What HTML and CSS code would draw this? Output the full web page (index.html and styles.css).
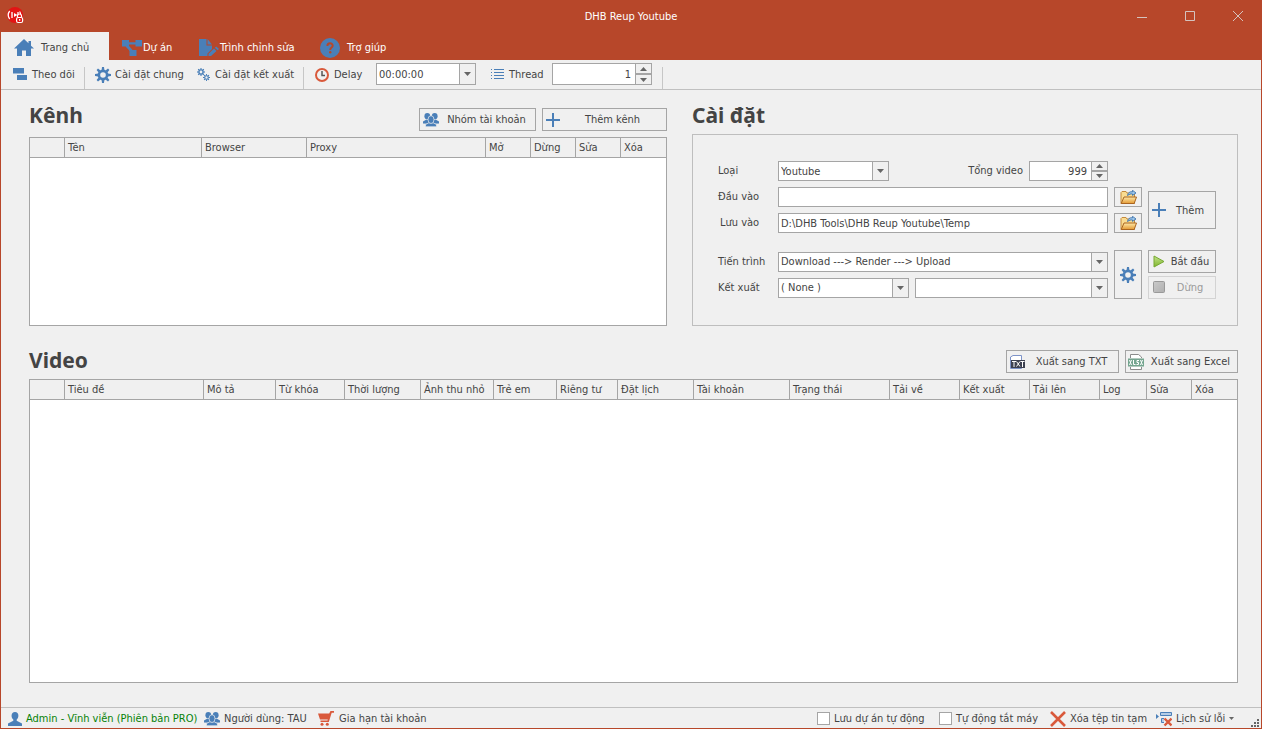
FILE: index.html
```html
<!DOCTYPE html>
<html lang="vi">
<head>
<meta charset="utf-8">
<title>DHB Reup Youtube</title>
<link rel="stylesheet" href="styles.css">
</head>
<body>
<svg class="sprite" aria-hidden="true">
  <symbol id="gear" viewBox="0 0 16 16"><g fill="#4a7fb8"><path fill-rule="evenodd" d="M8 2.600a5.400 5.400 0 1 0 0 10.800A5.400 5.400 0 1 0 8 2.600zM8 5.200a2.800 2.800 0 1 1 0 5.600 2.800 2.800 0 1 1 0-5.600z"/><path d="M7 0h2l.4 3.300H6.600zM7 16h2l.4-3.300H6.600zM0 7v2l3.300.4V6.600zM16 7v2l-3.300.4V6.600zM1.600 3l1.400-1.400 2.600 2-2 2zM13 1.600 14.400 3l-2 2.600-2-2zM1.600 13 3 14.400l2.600-2-2-2zM13 14.400l1.400-1.400-2-2.600-2 2z"/></g></symbol>
  <symbol id="people" viewBox="0 0 16 14"><g fill="#4a7fb8"><ellipse cx="4.300" cy="3.200" rx="2.900" ry="3.100"/><ellipse cx="11.700" cy="3.200" rx="2.900" ry="3.100"/><path d="M0 10.500V8.500l3-1.800h3l1 4zM16 10.500V8.500l-3-1.800h-3l-1 4z"/></g><g fill="#4a7fb8" stroke="#f0f0f0" stroke-width=".7"><path d="M2.500 13.800v-2.300l3.300-1.700h4.400l3.300 1.700v2.300z"/><ellipse cx="8" cy="6.600" rx="3" ry="3.900"/></g></symbol>
  <symbol id="plus" viewBox="0 0 14 14"><path fill="#4a7fb8" d="M6 0h2v6h6v2H8v6H6V8H0V6h6z"/></symbol>
  <symbol id="down" viewBox="0 0 7 4"><path fill="#666" d="M0 0h7L3.500 4z"/></symbol>
  <symbol id="up" viewBox="0 0 7 4"><path fill="#666" d="M0 4h7L3.500 0z"/></symbol>
  <symbol id="folder" viewBox="0 0 17 15"><defs><linearGradient id="fold" x1="0" y1="0" x2="0" y2="1"><stop offset="0" stop-color="#ffe9a8"/><stop offset="1" stop-color="#e39a35"/></linearGradient></defs><path d="M1 13.500V2.500L2 1.500h4l1 1.500h7.500v10.500z" fill="#f9dc92" stroke="#c58a3a"/><path d="M1.200 13.500 4 7h12.500l-2.300 6.500z" fill="url(#fold)" stroke="#a96420"/><path d="M7.500 5.500c.5-3 2.500-4.200 5-3.700V.3L16 3l-3.500 2.400V4c-2-.3-3 .2-5 1.500z" fill="#9cc6ea" stroke="#2f67a5" stroke-width=".8"/></symbol>
</svg>
<div class="window">
  <header class="titlebar">
    <svg class="logo" viewBox="0 0 18 18"><circle cx="8" cy="8" r="8" fill="#e31414"/><g fill="none" stroke="#fff" stroke-width="1.300"><path d="M2.700 4C.8 6.500.8 9.500 2.700 12M5 5v6M12.600 4.500c.7 1 1 2 1 3M11 5v3"/></g><path d="m7 6 3.500 2L7 10z" fill="#fff"/><path d="M10.500 10.500V9a2 2 0 0 1 4 0v1.500" fill="none" stroke="#fff" stroke-width="1.200"/><rect x="9.600" y="10.500" width="6" height="5" rx="1.500" fill="#e31414" stroke="#fff" stroke-width="1.200"/><path d="M12 12h1.300v1.800H12z" fill="#fff"/></svg>
    <h1 class="title">DHB Reup Youtube</h1>
    <div class="window-buttons">
      <button type="button" aria-label="Thu nhỏ"><svg viewBox="0 0 10 10"><path d="M0 6.500h10"/></svg></button>
      <button type="button" aria-label="Phóng to"><svg viewBox="0 0 10 10"><path d="M.5.5h9v9h-9z"/></svg></button>
      <button type="button" aria-label="Đóng"><svg viewBox="0 0 10 10"><path d="m0 0 10 10M10 0 0 10"/></svg></button>
    </div>
  </header>
  <nav class="tabs">
    <a class="tab tab-active" href="#home"><svg class="icon20" viewBox="0 0 20 20"><path fill="#4a7fb8" d="M10 1 0 10.500h3V18h5v-5.500h4V18h5v-7.500h3l-3-2.700V3h-2.500v2.200z"/></svg>Trang chủ</a>
    <a class="tab tab-project" href="#project"><svg class="icon20" viewBox="0 0 20 20"><g fill="#4a7fb8"><path d="M0 2h7v6.500H0zM13.500 2H20v6.500h-6.500zM7.500 12h7v6h-7z"/><path d="M6 4.200h9v2.200H6zM3.500 8.500 6.200 7l4.800 5.500-2.500 1.300z"/></g></svg>Dự án</a>
    <a class="tab tab-editor" href="#editor"><svg class="icon20" viewBox="0 0 20 20"><g fill="#4a7fb8"><path d="M0 1h7.500v6.500H13V11l-4.500 4.500V18H0z"/><path d="M8.500 1 13 6.500H8.500zM9.500 15.700l5.500-5.200 2.500 2.500-5.500 5H9.500zM15.800 9.700 17.200 8.500l2.800 2.600-1.500 1.200z"/></g></svg>Trình chỉnh sửa</a>
    <a class="tab tab-help" href="#help"><svg class="icon20" viewBox="0 0 20 20"><circle cx="10" cy="10" r="10" fill="#4a7fb8"/><path d="M7.400 8c0-3.600 5.400-3.400 5.300-.3 0 1.900-2.500 2-2.500 4.300" fill="none" stroke="#b7472a" stroke-width="2"/><circle cx="10.200" cy="14.200" r="1.200" fill="#b7472a"/></svg>Trợ giúp</a>
  </nav>
  <div class="frame">
    <div class="toolbar">
      <button type="button" class="tool tool-watch"><svg class="icon14" viewBox="0 0 14 14"><path fill="#4a7fb8" d="M0 0h11v5.500H0zM4 7h10v5H4z"/></svg>Theo dõi</button>
      <span class="divider"></span>
      <button type="button" class="tool tool-general"><svg class="icon16"><use href="#gear"/></svg>Cài đặt chung</button>
      <button type="button" class="tool tool-export"><svg class="icon14" viewBox="0 0 14 14"><use href="#gear" x="0" y="0" width="8" height="8"/><use href="#gear" x="6" y="6" width="7" height="7"/></svg>Cài đặt kết xuất</button>
      <span class="divider"></span>
      <label class="tool-label delay-label" for="delay"><svg class="icon14" viewBox="0 0 14 14"><circle cx="7" cy="7" r="6" fill="none" stroke="#d9593b" stroke-width="2"/><path d="M7 3v4.500h3" fill="none" stroke="#555" stroke-width="1.500"/></svg>Delay</label>
      <div class="field field-tall delay"><input id="delay" type="text" value="00:00:00"><button type="button" class="drop" aria-label="Mở danh sách"><svg class="arrow"><use href="#down"/></svg></button></div>
      <label class="tool-label thread-label" for="thread"><svg class="icon14" viewBox="0 0 14 14"><path fill="#4a7fb8" d="M1 1h1v1H1zM4 1h10v1H4zM1 4h1v1H1zM4 4h10v1H4zM1 7h1v1H1zM4 7h10v1H4zM1 10h1v1H1zM4 10h10v1H4z"/></svg>Thread</label>
      <div class="field field-tall thread"><input id="thread" class="number" type="number" value="1"><span class="spin"><button type="button" aria-label="Tăng"><svg class="arrow"><use href="#up"/></svg></button><button type="button" aria-label="Giảm"><svg class="arrow"><use href="#down"/></svg></button></span></div>
      <span class="divider"></span>
    </div>
    <main class="content">
      <section class="channels">
        <div class="section-head">
          <h2>Kênh</h2>
          <button type="button" class="btn btn-group"><svg class="icon16"><use href="#people"/></svg><span>Nhóm tài khoản</span></button>
          <button type="button" class="btn btn-channel"><svg class="icon14"><use href="#plus"/></svg><span>Thêm kênh</span></button>
        </div>
        <div class="grid-box">
          <table>
            <colgroup><col class="w35"><col class="w137"><col class="w105"><col class="w179"><col class="w45"><col class="w45"><col class="w45"><col class="w45"></colgroup>
            <thead><tr><th></th><th>Tên</th><th>Browser</th><th>Proxy</th><th>Mở</th><th>Dừng</th><th>Sửa</th><th>Xóa</th></tr></thead>
          </table>
        </div>
      </section>
      <section class="settings">
        <h2>Cài đặt</h2>
        <form class="panel">
          <div class="rows source">
            <label for="kind">Loại</label>
            <div class="row-pair">
              <div class="field kind"><select id="kind"><option>Youtube</option></select><span class="drop"><svg class="arrow"><use href="#down"/></svg></span></div>
              <div class="total"><label for="total">Tổng video</label>
              <div class="field total-field"><input id="total" class="number" type="number" value="999"><span class="spin"><button type="button" aria-label="Tăng"><svg class="arrow"><use href="#up"/></svg></button><button type="button" aria-label="Giảm"><svg class="arrow"><use href="#down"/></svg></button></span></div></div>
            </div>
            <label class="line2" for="input">Đầu vào</label>
            <div class="field line2"><input id="input" type="text"></div>
            <button type="button" class="btn btn-icon line2" aria-label="Chọn đầu vào"><svg class="folder"><use href="#folder"/></svg></button>
            <label class="line3 label-save" for="output">Lưu vào</label>
            <div class="field line3"><input id="output" type="text" value="D:\DHB Tools\DHB Reup Youtube\Temp"></div>
            <button type="button" class="btn btn-icon line3" aria-label="Chọn nơi lưu"><svg class="folder"><use href="#folder"/></svg></button>
            <button type="button" class="btn btn-add"><svg class="icon14"><use href="#plus"/></svg><span>Thêm</span></button>
          </div>
          <div class="rows process">
            <label for="process">Tiến trình</label>
            <div class="field"><select id="process"><option>Download ---&gt; Render ---&gt; Upload</option></select><span class="drop"><svg class="arrow"><use href="#down"/></svg></span></div>
            <button type="button" class="btn btn-icon btn-gear" aria-label="Cài đặt tiến trình"><svg class="icon16"><use href="#gear"/></svg></button>
            <button type="button" class="btn btn-run"><svg class="icon14" viewBox="0 0 14 14"><defs><linearGradient id="go" x1="0" y1="0" x2="0" y2="1"><stop offset="0" stop-color="#c3e38a"/><stop offset="1" stop-color="#7fb52c"/></linearGradient></defs><path d="M2 1 12 6.500 2 12z" fill="url(#go)" stroke="#76a833"/></svg><span>Bắt đầu</span></button>
            <label for="export">Kết xuất</label>
            <div class="row-pair">
              <div class="field export"><select id="export"><option>( None )</option></select><span class="drop"><svg class="arrow"><use href="#down"/></svg></span></div>
              <div class="field preset"><select aria-label="Mẫu kết xuất"><option></option></select><span class="drop"><svg class="arrow"><use href="#down"/></svg></span></div>
            </div>
            <button type="button" class="btn btn-run" disabled><svg class="icon14" viewBox="0 0 14 14"><defs><linearGradient id="halt" x1="0" y1="0" x2="1" y2="1"><stop offset="0" stop-color="#cacaca"/><stop offset="1" stop-color="#afafaf"/></linearGradient></defs><rect x="1.500" y=".5" width="11" height="11" rx="1" fill="url(#halt)" stroke="#999"/></svg><span>Dừng</span></button>
          </div>
        </form>
      </section>
      <section class="videos">
        <div class="section-head">
          <h2>Video</h2>
          <button type="button" class="btn btn-file"><svg class="icon16" viewBox="0 0 16 16"><path d="M1.500 14.500V3L4 1.500h8.500v13z" fill="#fff" stroke="#7d93c8"/><path fill="#3c4050" d="M2 6h14v8H2z"/><path d="M3 7.500h4M5 7.500V13M7.500 7.500 11 12.500M11 7.500 7.500 12.500M11.500 7.500h4M13.500 7.500V13" stroke="#fff" fill="none"/></svg><span>Xuất sang TXT</span></button>
          <button type="button" class="btn btn-file"><svg class="icon16" viewBox="0 0 16 16"><path d="M2.500 4V.5h8L13.500 3v1M2.500 13v2.500h11V13" fill="#fff" stroke="#8b8b8b"/><path fill="#74a58f" d="M0 4.500h16v8H0z"/><path d="m1.500 6 2 5M3.500 6l-2 5M5.500 6v4.500h2M11 6.500H9v2h1.500v2H8.500M12.500 6l2 5M14.500 6l-2 5" stroke="#fff" fill="none"/></svg><span>Xuất sang Excel</span></button>
        </div>
        <div class="grid-box">
          <table>
            <colgroup><col class="w35"><col class="w139"><col class="w72"><col class="w69"><col class="w76"><col class="w73"><col class="w63"><col class="w61"><col class="w76"><col class="w96"><col class="w100"><col class="w70"><col class="w70"><col class="w70"><col class="w47"><col class="w45"><col class="w45"></colgroup>
            <thead><tr><th></th><th>Tiêu đề</th><th>Mô tả</th><th>Từ khóa</th><th>Thời lượng</th><th>Ảnh thu nhỏ</th><th>Trẻ em</th><th>Riêng tư</th><th>Đặt lịch</th><th>Tài khoản</th><th>Trạng thái</th><th>Tải về</th><th>Kết xuất</th><th>Tải lên</th><th>Log</th><th>Sửa</th><th>Xóa</th></tr></thead>
          </table>
        </div>
      </section>
    </main>
    <footer class="status">
      <span class="account"><svg class="icon14" viewBox="0 0 14 14"><path fill="#4a7fb8" d="M7 0c4.500 0 4 6 1.700 7.500v1.300L14 11.500V14H0v-2.500l5.300-2.700V7.500C3 6 2.500 0 7 0z"/></svg>Admin - Vĩnh viễn (Phiên bản PRO)</span>
      <span class="user"><svg class="icon16"><use href="#people"/></svg>Người dùng: TAU</span>
      <button type="button" class="tool renew"><svg class="icon16" viewBox="0 0 16 16"><path fill="#d9593b" d="M0 2.500h11.200L12.500 0H16v1.700h-2.300L10.800 11H2.500V9.600h7l.3-1H2z"/><circle cx="4" cy="13.300" r="1.500" fill="#d9593b"/><circle cx="9.300" cy="13.300" r="1.500" fill="#d9593b"/></svg>Gia hạn tài khoản</button>
      <label class="check autosave"><input type="checkbox">Lưu dự án tự động</label>
      <label class="check shutdown"><input type="checkbox">Tự động tắt máy</label>
      <button type="button" class="tool cleanup"><svg class="icon16" viewBox="0 0 16 16"><path d="m1 1 14 14M15 1 1 15" stroke="#d9593b" stroke-width="2.600"/></svg>Xóa tệp tin tạm</button>
      <button type="button" class="tool errors"><svg class="icon16" viewBox="0 0 16 16"><path fill="#4a7fb8" d="M0 3l3 2.500L0 8z"/><path d="M4.500 1.500h11v3h-11zM8 7.500H5.500v4H8" fill="#b5cce5" stroke="#4a7fb8"/><path d="m8.500 7.500 7 7M15.500 7.500l-7 7" stroke="#d9593b" stroke-width="2.400"/></svg>Lịch sử lỗi<svg class="caret"><use href="#down"/></svg></button>
      <svg class="grip" viewBox="0 0 9 9"><path fill="#666" d="M6 0h2v2H6zM3 3h2v2H3zM6 3h2v2H6zM0 6h2v2H0zM3 6h2v2H3zM6 6h2v2H6z"/></svg>
    </footer>
  </div>
</div>
</body>
</html>
```
FILE: styles.css
```css
* { box-sizing: border-box; }
:root { --accent: #b7472a; --face: #f0f0f0; --line: #a5a5a5; --text: #444; }
body { margin: 0; background: var(--face); color: var(--text); font: 11px/14px "DejaVu Sans Condensed", "DejaVu Sans", sans-serif; font-stretch: condensed; }
button, input, select { font: inherit; color: inherit; margin: 0; padding: 0; border: 0; background: none; border-radius: 0; white-space: nowrap; }
svg { display: block; flex: none; }
.sprite { position: absolute; width: 0; height: 0; }
.icon14 { width: 14px; height: 14px; }
.icon16 { width: 16px; height: 16px; }
.icon20 { width: 20px; height: 20px; }
.arrow { width: 7px; height: 4px; }
.window { min-height: 100vh; display: flex; flex-direction: column; }

.titlebar { height: 32px; display: grid; grid-template-columns: 1fr auto 1fr; align-items: center; background: var(--accent); color: #fff; }
.logo { width: 18px; height: 18px; margin-left: 7px; }
.title { margin: 0; font-size: 11px; font-weight: 400; padding-top: 2px; }
.window-buttons { display: flex; justify-content: flex-end; align-self: stretch; }
.window-buttons button { width: 48px; display: grid; place-items: center; }
.window-buttons svg { width: 10px; height: 10px; fill: none; stroke: #d5c3be; }

.tabs { height: 28px; display: flex; background: var(--accent); padding-left: 1px; }
.tab { display: flex; align-items: center; color: #fff; text-decoration: none; padding-top: 3px; white-space: nowrap; }
.tab-active { width: 108px; padding-left: 13px; gap: 7px; background: var(--face); color: var(--text); }
.tab-project { width: 77px; padding-left: 13px; gap: 1px; }
.tab-editor { width: 121px; padding-left: 13px; gap: 1px; }
.tab-help { padding: 3px 13px 0; gap: 7px; }

.frame { flex: 1; display: flex; flex-direction: column; border: 1px solid var(--accent); border-top: 0; }
.toolbar { height: 30px; display: flex; align-items: center; border-bottom: 1px solid #c0c0c0; white-space: nowrap; }
.tool, .tool-label { display: flex; align-items: center; gap: 5px; }
.tool-watch { width: 83px; padding-left: 12px; }
.tool-general { width: 112px; padding-left: 10px; gap: 4px; }
.tool-export { width: 106px; gap: 4px; }
.delay-label { width: 72px; padding-left: 11px; }
.thread-label { width: 76px; padding-left: 14px; }
.divider { width: 1px; height: 22px; background: #c6c6c6; align-self: flex-end; }
.field { display: flex; height: 20px; min-width: 0; border: 1px solid var(--line); background: #fff; }
.field-tall { height: 22px; }
.toolbar .field { margin-bottom: 1px; }
.field input, .field select { flex: 1; min-width: 0; width: 100%; padding: 1px 3px 0 2px; outline: 0; }
.field select { appearance: none; padding-right: 20px; }
.field select + .drop { margin-left: -16px; pointer-events: none; }
.field .number { appearance: textfield; text-align: right; padding-right: 4px; }
.number::-webkit-inner-spin-button { display: none; }
.drop { flex: none; width: 16px; display: grid; place-items: center; border-left: 1px solid var(--line); background: var(--face); }
.spin { flex: none; width: 16px; display: flex; flex-direction: column; border-left: 1px solid var(--line); background: var(--face); }
.spin button { flex: 1; display: grid; place-items: center; }
.spin button + button { border-top: 2px solid var(--line); }
.delay { width: 100px; }
.thread { width: 100px; margin-right: 10px; }

.content { flex: 1; display: grid; grid-template-columns: 638fr 546fr; grid-template-rows: auto 1fr; column-gap: 25px; row-gap: 24px; padding: 18px 23px 24px 28px; }
.channels, .videos { display: flex; flex-direction: column; min-width: 0; }
.videos { grid-column: 1 / -1; }
.section-head { display: flex; gap: 6px; height: 23px; margin-bottom: 6px; }
h2 { margin: 0; font: 700 21px/14px "Noto Sans", sans-serif; }
.section-head h2 { margin-right: auto; }
.videos h2 { line-height: 20px; }
.btn { display: flex; align-items: center; height: 23px; border: 1px solid var(--line); background: var(--face); padding: 0 3px; }
.btn span { flex: 1; text-align: center; padding: 1px 0 0 2px; }
.btn:disabled { border-color: #d3d3d3; color: #9a9a9a; }
.btn-group { width: 117px; }
.btn-channel { width: 125px; }
.btn-file { width: 113px; padding: 0 2px; }
.grid-box { flex: 1; border: 1px solid var(--line); background: #fff; }
table { width: 100%; table-layout: fixed; border-collapse: separate; border-spacing: 0; }
th { height: 20px; padding: 1px 0 0 3px; text-align: left; font-weight: 400; white-space: nowrap; background: var(--face); border-right: 1px solid var(--line); border-bottom: 1px solid var(--line); }
th:last-child { border-right: 0; }
.w35 { width: 35px; } .w45 { width: 45px; } .w47 { width: 47px; } .w61 { width: 61px; } .w63 { width: 63px; }
.w69 { width: 69px; } .w70 { width: 70px; } .w72 { width: 72px; } .w73 { width: 73px; } .w76 { width: 76px; }
.w96 { width: 96px; } .w100 { width: 100px; } .w105 { width: 105px; } .w137 { width: 137px; } .w139 { width: 139px; } .w179 { width: 179px; }

.panel { margin-top: 12px; border: 1px solid #bebebe; padding: 26px 21px 26px 25px; display: grid; gap: 17px; }
.rows { display: grid; grid-template-columns: 54px 1fr 28px 68px; column-gap: 6px; row-gap: 6px; align-items: center; }
.rows label { white-space: nowrap; }
.label-save { padding-left: 2px; }
.row-pair { display: flex; justify-content: space-between; gap: 6px; }
.line2 { grid-row: 2; }
.line3 { grid-row: 3; }
.kind { width: 111px; }
.total { display: flex; align-items: center; gap: 6px; }
.total-field { width: 79px; }
.btn-icon { height: 20px; padding: 0; justify-content: center; }
.folder { width: 17px; height: 15px; }
.btn-add { grid-column: 4; grid-row: 2 / 4; height: 38px; }
.process { grid-template-rows: 23px 23px; row-gap: 3px; }
.process .btn-gear { grid-column: 3; grid-row: 1 / 3; height: 49px; }
.btn-run { grid-column: 4; }
.export { flex: 131; }
.preset { flex: 193; }

.status { height: 21px; display: flex; align-items: center; padding-top: 1px; border-top: 1px solid #c0c0c0; white-space: nowrap; }
.status > span, .check { display: flex; align-items: center; gap: 4px; }
.account { color: #078207; padding-left: 7px; width: 203px; }
.user { width: 114px; }
.renew { margin-right: auto; }
.check input { appearance: none; width: 13px; height: 13px; border: 1px solid var(--line); background: #fff; }
.autosave { width: 122px; }
.shutdown { width: 111px; }
.cleanup { width: 106px; gap: 4px; }
.errors { width: 95px; gap: 4px; }
.caret { width: 5px; height: 3px; }
.grip { width: 9px; height: 9px; align-self: flex-end; margin-right: 1px; }
```
